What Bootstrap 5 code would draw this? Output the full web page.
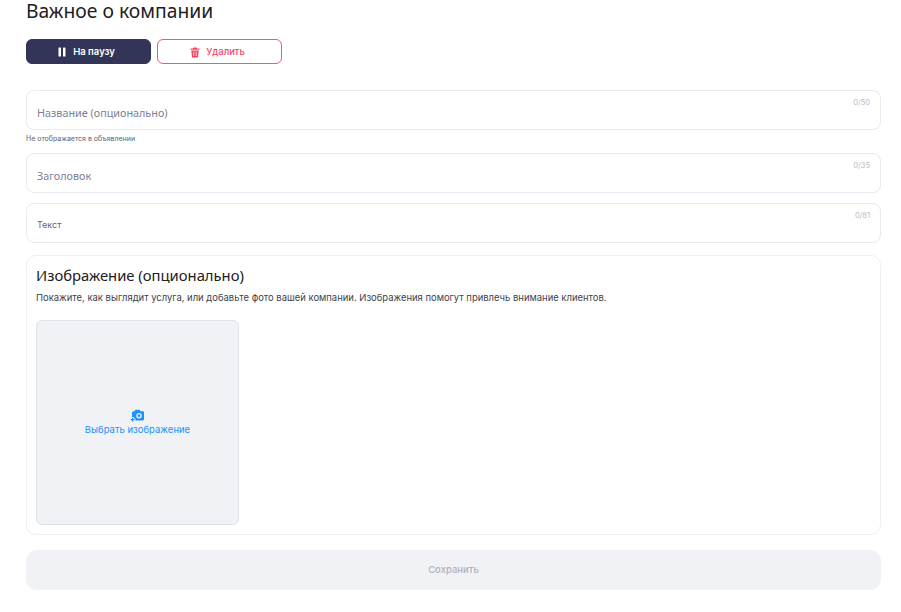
<!DOCTYPE html>
<html lang="ru">
<head>
  <meta charset="UTF-8">
  <title>Важное о компании</title>
  <link href="https://cdn.jsdelivr.net/npm/bootstrap@5.3.0/dist/css/bootstrap.min.css" rel="stylesheet">
  <style>
    body { font-family: Inter, "Noto Sans", sans-serif; color: #21201f; background: #fff; overflow: hidden; }
    .page-wrap { padding: 0 20px 0 26px; }
    .page-title { font-family: "Noto Sans", sans-serif; font-size: 19.3px; line-height: 22px; height: 39px; margin: 0; font-weight: 400; }
    .act-row { gap: 6px; margin-bottom: 26px; }
    .act-btn { width: 125px; height: 25px; padding: 1px 4px 0 0; font-size: 9.5px; font-weight: 600; border-radius: 6px; gap: 7px; }
    .act-pause { background: #333558; border: 1px solid #333558; color: #fff; }
    .act-del { background: #fff; border: 1px solid #f9576c; color: #f9435c; font-weight: 500; font-size: 9.4px; gap: 6px; }
    .field-box { height: 40px; border: 1px solid #e9e9f1; border-radius: 8px; padding: 0 10px; position: relative; }
    .field-gap { margin-bottom: 10px; }
    .field-ph { font-family: "Noto Sans", sans-serif; font-size: 10.8px; color: #7c8093; line-height: 1; padding-top: 16.5px; }
    .field-ph-sm { font-family: Inter, sans-serif; font-size: 9px; color: #60647a; padding-top: 16px; }
    .field-count { position: absolute; top: 7px; right: 10px; font-size: 7.5px; line-height: 10px; color: #b5b8c6; }
    .field-hint { font-size: 7px; line-height: 9px; color: #5b5f73; margin: 4px 0 10px; }
    .img-panel { height: 280px; border: 1px solid #eeeef4; border-radius: 10px; margin-top: 12px; padding: 9px 9px 9px; }
    .img-title { font-family: "Noto Sans", sans-serif; font-size: 14.8px; line-height: 20px; font-weight: 400; margin: 0 0 7px; }
    .img-desc { font-size: 9.45px; line-height: 12px; color: #3d3f4b; margin: 0 0 16px; }
    .img-drop { width: 203px; height: 205px; background: #f1f2f6; border: 1px solid #dfe1ea; border-radius: 6px; color: #1e90ff; font-size: 9.5px; line-height: 12px; }
    .img-drop svg { margin-bottom: 2px; }
    .save-btn { height: 40px; margin-top: 15px; background: #f1f2f6; border: 0; border-radius: 11px; color: #aeb1c0; font-size: 9.5px; font-weight: 500; width: 100%; display: block; }
  </style>
</head>
<body>
<div class="page-wrap">
  <h1 class="page-title">Важное о компании</h1>

  <div class="d-flex act-row">
    <button type="button" class="btn act-btn act-pause d-flex align-items-center justify-content-center">
      <svg width="8" height="10" viewBox="0 0 8 10"><rect x="0.5" y="0.5" width="2.5" height="9" rx=".6" fill="#fff"/><rect x="5" y="0.5" width="2.5" height="9" rx=".6" fill="#fff"/></svg>
      На паузу
    </button>
    <button type="button" class="btn act-btn act-del d-flex align-items-center justify-content-center">
      <svg width="10" height="11" viewBox="0 0 10 11"><path d="M3.5 0.5h3l.5 1h2.5v1.3H.5V1.500H3zM1.300 3.500h7.400L8 10.500H2zM3.400 4.800v4.200h.8V4.800zM5.800 4.800v4.200h.8V4.800z" fill="#f9435c" fill-rule="evenodd"/></svg>
      Удалить
    </button>
  </div>

  <div class="field-box">
    <div class="field-ph">Название (опционально)</div>
    <span class="field-count">0/50</span>
  </div>
  <div class="field-hint">Не отображается в объявлении</div>

  <div class="field-box field-gap">
    <div class="field-ph">Заголовок</div>
    <span class="field-count">0/35</span>
  </div>

  <div class="field-box">
    <div class="field-ph field-ph-sm">Текст</div>
    <span class="field-count">0/81</span>
  </div>

  <div class="img-panel">
    <h2 class="img-title">Изображение (опционально)</h2>
    <p class="img-desc">Покажите, как выглядит услуга, или добавьте фото вашей компании. Изображения помогут привлечь внимание клиентов.</p>
    <div class="img-drop d-flex flex-column align-items-center justify-content-center">
      <svg width="15" height="13" viewBox="0 0 15 13"><path fill="#1e90ff" fill-rule="evenodd" d="M5.500.8h4l1 1.500h2.300c.7 0 1.200.5 1.200 1.200v6.800c0 .7-.5 1.200-1.200 1.200H5.500V9.500H4V8H2V4c0-1 .7-1.700 1.500-1.700h1zM9 4a2.700 2.700 0 1 0 0 5.400A2.700 2.700 0 0 0 9 4zm0 1.300a1.400 1.400 0 1 1 0 2.800 1.400 1.400 0 0 1 0-2.800z"/><path fill="#1e90ff" d="M2 8.800h1.200V10h1.300v1.200H3.200v1.300H2v-1.300H.7V10H2z"/></svg>
      Выбрать изображение
    </div>
  </div>

  <button type="button" class="save-btn" disabled>Сохранить</button>
</div>
<script src="https://cdn.jsdelivr.net/npm/bootstrap@5.3.0/dist/js/bootstrap.bundle.min.js"></script>
</body>
</html>
